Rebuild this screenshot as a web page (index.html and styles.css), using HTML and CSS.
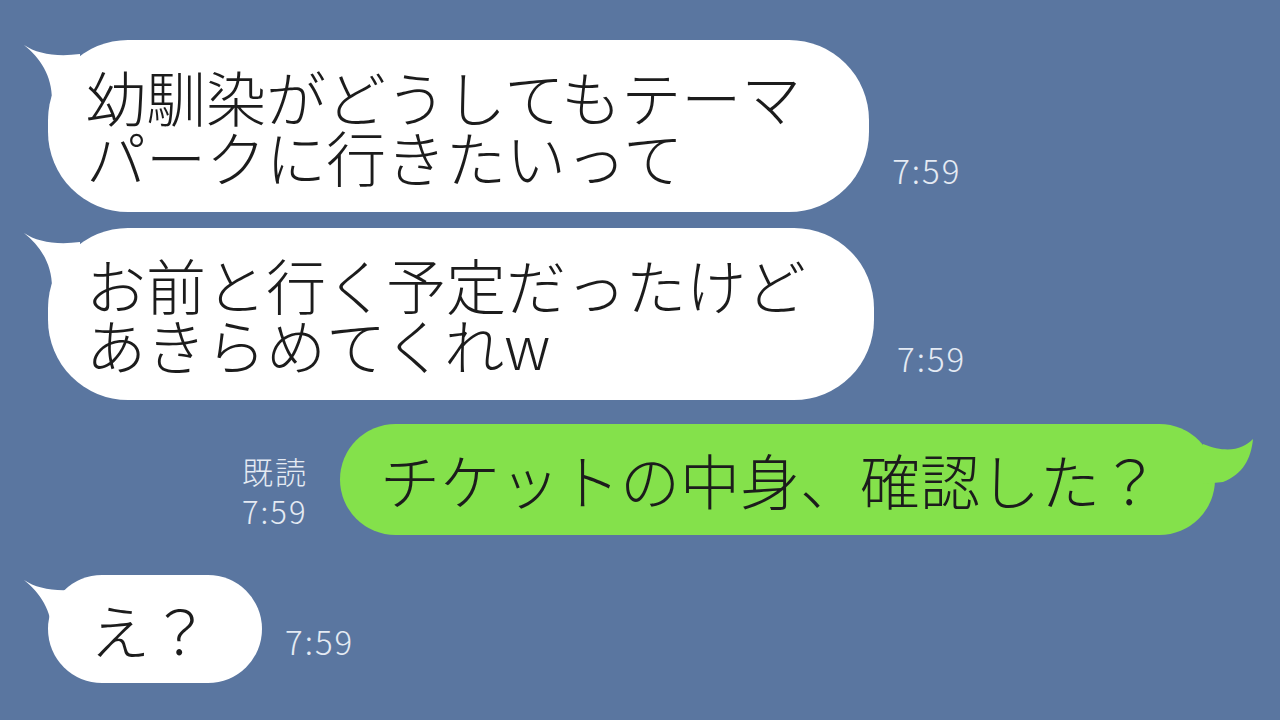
FILE: index.html
```html
<!DOCTYPE html>
<html lang="ja">
<head>
<meta charset="utf-8">
<title>トーク</title>
<link rel="stylesheet" href="styles.css">
</head>
<body>
<main class="chat">
  <div class="row row-in first">
    <div class="bubble bubble-in wide">
      <svg class="tail tail-in" width="60" height="70" viewBox="0 0 60 70"><path d="M2 5 C15 14 35 17 58 14 L58 66 L30 60 C30 35 18 18 2 5 Z"/></svg>
      <p class="msg">幼馴染がどうしてもテーマ<br>パークに行きたいって</p>
    </div>
    <span class="time">7:59</span>
  </div>

  <div class="row row-in">
    <div class="bubble bubble-in wide">
      <svg class="tail tail-in" width="60" height="70" viewBox="0 0 60 70"><path d="M2 5 C15 14 35 17 58 14 L58 66 L30 60 C30 35 18 18 2 5 Z"/></svg>
      <p class="msg">お前と行く予定だったけど<br>あきらめてくれw</p>
    </div>
    <span class="time">7:59</span>
  </div>

  <div class="row row-out">
    <div class="read">
      <span>既読</span>
      <span>7:59</span>
    </div>
    <div class="bubble bubble-out">
      <svg class="tail tail-out" width="54" height="70" viewBox="0 0 54 70"><path d="M0 20 C25 30 40 25 50 15 C48 35 40 50 20 58 L0 60 Z"/></svg>
      <p class="msg">チケットの中身、確認した？</p>
    </div>
  </div>

  <div class="row row-in">
    <div class="bubble bubble-in short">
      <svg class="tail tail-in" width="60" height="70" viewBox="0 0 60 70"><path d="M2 5 C15 14 35 17 58 14 L58 66 L30 60 C30 35 18 18 2 5 Z"/></svg>
      <p class="msg">え？</p>
    </div>
    <span class="time">7:59</span>
  </div>
</main>
</body>
</html>
```
FILE: styles.css
```css
html, body {
  margin: 0;
  padding: 0;
}

body {
  width: 1280px;
  height: 720px;
  overflow: hidden;
  background: #5a76a0;
  font-family: "Noto Sans CJK JP", "Noto Sans", sans-serif;
  font-weight: 200;
}

.chat {
  display: flex;
  flex-direction: column;
  gap: 16px;
  padding: 40px 0 0 48px;
}

.row {
  display: flex;
  align-items: flex-end;
}

.row-out {
  justify-content: flex-end;
  padding-right: 65px;
  margin-top: 8px;
  gap: 32px;
}

.row-out + .row-in {
  margin-top: 24px;
}

.bubble {
  position: relative;
  color: #1c1c1c;
}

.bubble-in {
  background: #ffffff;
}

.bubble-in.wide {
  border-radius: 80px;
  padding: 26px 68px 26px 38px;
}

.bubble-in.short {
  border-radius: 56px;
  padding: 24px 52px 24px 42px;
}

.bubble-out {
  background: #84e14b;
  border-radius: 56px;
  padding: 25px 55px 26px 40px;
}

.msg {
  margin: 0;
  font-size: 60px;
  line-height: 60px;
  white-space: nowrap;
  position: relative;
}

.tail {
  position: absolute;
  top: 0;
}

.tail-in {
  left: -26px;
  fill: #ffffff;
}

.tail-out {
  right: -42px;
  fill: #84e14b;
}

.time {
  color: #e4eaf3;
  font-size: 33px;
  line-height: 40px;
  margin: 0 0 22px 23px;
  letter-spacing: 2px;
}

.read {
  display: flex;
  flex-direction: column;
  align-items: flex-start;
  color: #e4eaf3;
  font-size: 31px;
  line-height: 40px;
  margin-bottom: 4px;
  letter-spacing: 2px;
}
```
